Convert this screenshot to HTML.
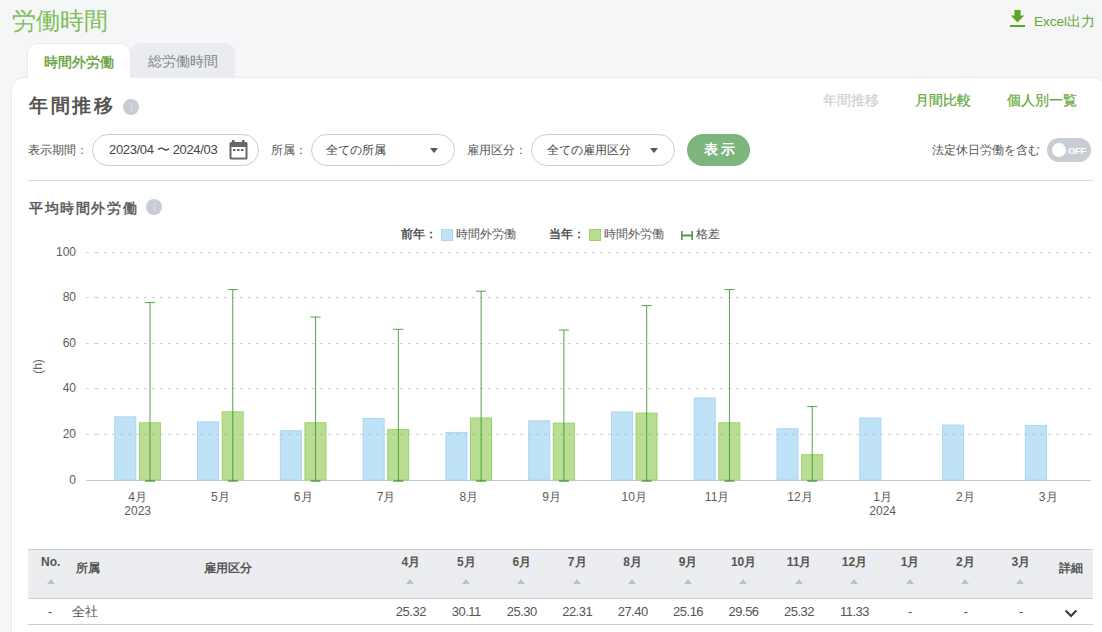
<!DOCTYPE html>
<html><head><meta charset="utf-8">
<style>
*{box-sizing:border-box;margin:0;padding:0}
html,body{width:1102px;height:632px;overflow:hidden;background:#f5f6f8;font-family:"Liberation Sans",sans-serif;color:#555}
.a{position:absolute;white-space:nowrap}
.title{left:12px;top:6.5px;font-size:24px;line-height:28px;color:#80bd57;font-weight:300}
.excel{left:1010px;top:9px;height:20px}
.excel span{position:absolute;left:24px;top:5px;font-size:13.5px;line-height:16px;color:#62a832}
.tab1{left:27px;top:43px;width:104px;height:35px;background:#fff;border:1px solid #e8eaed;border-bottom:none;border-radius:10px 10px 0 0;z-index:2}
.tab1 span{position:absolute;left:16px;top:10px;font-size:14px;line-height:16px;color:#5fa03a;font-weight:normal;-webkit-text-stroke:0.35px #5fa03a}
.tab2{left:130px;top:43px;width:105px;height:34px;background:#eaecef;border-radius:10px 10px 0 0}
.tab2 span{position:absolute;left:18px;top:10px;font-size:14px;line-height:16px;color:#7d8591}
.card{left:11px;top:77px;width:1096px;height:600px;background:#fff;border:1px solid #e8eaed;border-radius:13px;z-index:1}
.h1{left:29px;top:95px;font-size:19px;line-height:22px;font-weight:bold;color:#555;letter-spacing:2.5px}
.info{width:16px;height:16px;border-radius:50%;background:#c8cdd4}
.info:after{content:"";position:absolute;left:7.5px;top:6.5px;width:1.2px;height:5px;background:#e0e4e8}
.info:before{content:"";position:absolute;left:7.5px;top:4px;width:1.2px;height:1.5px;background:#e0e4e8}
.nav{top:92px;font-size:14px;line-height:16px;color:#62a735;-webkit-text-stroke:0.2px currentColor}
.lbl{font-size:12px;line-height:14px;color:#555}
.pill{height:32px;border:1px solid #c9cfd6;border-radius:16px;background:#fff}
.pill span{position:absolute;top:8px;font-size:13px;line-height:14px;color:#444}
.tri{position:absolute;width:0;height:0;border-left:4px solid transparent;border-right:4px solid transparent;border-top:5px solid #555}
.btn{left:687px;top:134px;width:63px;height:32px;border-radius:16px;background:#7db57f}
.btn span{position:absolute;left:16.5px;top:7px;font-size:14px;line-height:16px;color:#fff;font-weight:bold;letter-spacing:3.5px}
.toggle{left:1047px;top:138px;width:44px;height:24px;border-radius:12px;background:#c8cdd4}
.toggle i{position:absolute;left:5px;top:5px;width:14px;height:14px;border-radius:50%;background:#fff}
.toggle span{position:absolute;left:21px;top:6.5px;font-size:9.5px;line-height:11px;color:#fff;font-weight:bold;letter-spacing:-0.5px}
.sep{left:28px;top:180px;width:1065px;height:1px;background:#d5dbe1}
.h2{left:29px;top:200px;font-size:14px;line-height:17px;font-weight:normal;color:#555;letter-spacing:1.6px;-webkit-text-stroke:0.45px #555}
.leg{top:227px;font-size:12px;line-height:14px;color:#555}
.box{width:12px;height:12px}
svg text{font-family:"Liberation Sans",sans-serif;font-size:12px;fill:#5c5c5c}
.thead{left:28px;top:549px;width:1065px;height:50px;background:#ebedf0;border-top:1px solid #c9ced6;border-bottom:1px solid #c9ced6}
.rowb{left:28px;top:624px;width:1065px;height:1px;background:#c9ced6}
.th{font-size:12px;line-height:14px;font-weight:bold;color:#555}
.td{font-size:13px;line-height:14px;color:#555;letter-spacing:-0.5px}
.sort{position:absolute;width:0;height:0;border-left:4.5px solid transparent;border-right:4.5px solid transparent;border-bottom:5px solid #b9c1c9}
</style></head><body>
<div class="a title">労働時間</div>
<div class="a excel"><svg width="16" height="18" viewBox="0 0 16 18" style="position:absolute;left:0;top:1px"><path d="M4.4 0h6.2v5.6h3.6L7.5 12.6 0.8 5.6h3.6z" fill="#5fa51f"/><rect x="0" y="15" width="15" height="2" fill="#5fa51f"/></svg><span>Excel出力</span></div>
<div class="a tab2"><span>総労働時間</span></div>
<div class="a tab1"><span>時間外労働</span></div>
<div class="a card"></div>
<div style="position:absolute;left:0;top:0;width:1102px;height:632px;z-index:3">
<div class="a h1">年間推移</div>
<div class="a info" style="left:123px;top:99px"></div>
<div class="a nav" style="left:823px;color:#cfcfcf">年間推移</div>
<div class="a nav" style="left:915px">月間比較</div>
<div class="a nav" style="left:1007px">個人別一覧</div>

<div class="a lbl" style="left:28px;top:143px">表示期間：</div>
<div class="a pill" style="left:92px;top:134px;width:167px"><span style="left:16px;letter-spacing:-0.35px">2023/04 〜 2024/03</span>
<svg width="20" height="21" viewBox="0 0 20 21" style="position:absolute;left:136px;top:5px"><rect x="3" y="0" width="2.5" height="3" fill="#666"/><rect x="13" y="0" width="2.5" height="3" fill="#666"/><rect x="0.5" y="2" width="18" height="17.6" rx="1.5" fill="#666"/><rect x="2.5" y="7" width="14" height="10.6" fill="#fff"/><rect x="4" y="9" width="2.5" height="2" fill="#666"/><rect x="8" y="9" width="2.5" height="2" fill="#666"/><rect x="12" y="9" width="2.5" height="2" fill="#666"/></svg></div>
<div class="a lbl" style="left:271px;top:143px">所属：</div>
<div class="a pill" style="left:311px;top:134px;width:144px"><span style="left:14px;font-size:12px;top:8px">全ての所属</span><i class="tri" style="left:118px;top:13px"></i></div>
<div class="a lbl" style="left:467px;top:143px">雇用区分：</div>
<div class="a pill" style="left:531px;top:134px;width:144px"><span style="left:15px;font-size:12px;top:8px">全ての雇用区分</span><i class="tri" style="left:118px;top:13px"></i></div>
<div class="a btn"><span>表示</span></div>
<div class="a lbl" style="left:932px;top:143px">法定休日労働を含む</div>
<div class="a toggle"><i></i><span>OFF</span></div>
<div class="a sep"></div>

<div class="a h2">平均時間外労働</div>
<div class="a info" style="left:146px;top:199px"></div>

<div class="a leg" style="left:401px;font-weight:bold">前年：</div>
<div class="a box" style="left:441px;top:229px;background:#bfe2f7;border:1px solid #a8d6f4"></div>
<div class="a leg" style="left:456px">時間外労働</div>
<div class="a leg" style="left:549px;font-weight:bold">当年：</div>
<div class="a box" style="left:589px;top:229px;background:#b9df93;border:1px solid #9ad26c"></div>
<div class="a leg" style="left:604px">時間外労働</div>
<svg class="a" style="left:681px;top:231px" width="12" height="9"><rect x="0" y="0" width="1.6" height="9" fill="#4a9d3e"/><rect x="10.4" y="0" width="1.6" height="9" fill="#4a9d3e"/><rect x="0" y="3.5" width="12" height="2" fill="#4a9d3e"/></svg>
<div class="a leg" style="left:696px">格差</div>

<svg class="a" style="left:0;top:0" width="1102" height="632">
<text x="37.5" y="366.5" transform="rotate(-90 37.5 366.5)" text-anchor="middle" dominant-baseline="central" style="font-size:12px;fill:#666">(h)</text>
<path d="M86 434.5h3M94 434.5h5" stroke="#ccd3da" stroke-width="1"/><line x1="104" y1="434.5" x2="1091" y2="434.5" stroke="#ccd3da" stroke-width="1" stroke-dasharray="3,5"/>
<path d="M86 388.5h3M94 388.5h5" stroke="#ccd3da" stroke-width="1"/><line x1="104" y1="388.5" x2="1091" y2="388.5" stroke="#ccd3da" stroke-width="1" stroke-dasharray="3,5"/>
<path d="M86 343.5h3M94 343.5h5" stroke="#ccd3da" stroke-width="1"/><line x1="104" y1="343.5" x2="1091" y2="343.5" stroke="#ccd3da" stroke-width="1" stroke-dasharray="3,5"/>
<path d="M86 297.5h3M94 297.5h5" stroke="#ccd3da" stroke-width="1"/><line x1="104" y1="297.5" x2="1091" y2="297.5" stroke="#ccd3da" stroke-width="1" stroke-dasharray="3,5"/>
<path d="M86 252.5h3M94 252.5h5" stroke="#ccd3da" stroke-width="1"/><line x1="104" y1="252.5" x2="1091" y2="252.5" stroke="#ccd3da" stroke-width="1" stroke-dasharray="3,5"/>
<line x1="86" y1="480.5" x2="1091" y2="480.5" stroke="#c5ccd4" stroke-width="1"/>
<rect x="114.80" y="416.9" width="21" height="63.1" fill="rgba(127,197,239,0.5)" stroke="#a8d6f4" stroke-width="1"/>
<rect x="139.40" y="422.8" width="21" height="57.2" fill="rgba(115,190,40,0.5)" stroke="#9ad26c" stroke-width="1"/>
<text x="137.7" y="501" text-anchor="middle">4月</text>
<text x="137.7" y="515" text-anchor="middle">2023</text>
<rect x="197.58" y="421.9" width="21" height="58.1" fill="rgba(127,197,239,0.5)" stroke="#a8d6f4" stroke-width="1"/>
<rect x="222.18" y="411.8" width="21" height="68.2" fill="rgba(115,190,40,0.5)" stroke="#9ad26c" stroke-width="1"/>
<text x="220.4" y="501" text-anchor="middle">5月</text>
<rect x="280.36" y="430.8" width="21" height="49.2" fill="rgba(127,197,239,0.5)" stroke="#a8d6f4" stroke-width="1"/>
<rect x="304.96" y="422.8" width="21" height="57.2" fill="rgba(115,190,40,0.5)" stroke="#9ad26c" stroke-width="1"/>
<text x="303.2" y="501" text-anchor="middle">6月</text>
<rect x="363.14" y="418.5" width="21" height="61.5" fill="rgba(127,197,239,0.5)" stroke="#a8d6f4" stroke-width="1"/>
<rect x="387.74" y="429.6" width="21" height="50.4" fill="rgba(115,190,40,0.5)" stroke="#9ad26c" stroke-width="1"/>
<text x="386.0" y="501" text-anchor="middle">7月</text>
<rect x="445.92" y="432.4" width="21" height="47.6" fill="rgba(127,197,239,0.5)" stroke="#a8d6f4" stroke-width="1"/>
<rect x="470.52" y="418.0" width="21" height="62.0" fill="rgba(115,190,40,0.5)" stroke="#9ad26c" stroke-width="1"/>
<text x="468.8" y="501" text-anchor="middle">8月</text>
<rect x="528.70" y="420.8" width="21" height="59.2" fill="rgba(127,197,239,0.5)" stroke="#a8d6f4" stroke-width="1"/>
<rect x="553.30" y="423.1" width="21" height="56.9" fill="rgba(115,190,40,0.5)" stroke="#9ad26c" stroke-width="1"/>
<text x="551.5" y="501" text-anchor="middle">9月</text>
<rect x="611.48" y="411.9" width="21" height="68.1" fill="rgba(127,197,239,0.5)" stroke="#a8d6f4" stroke-width="1"/>
<rect x="636.08" y="413.1" width="21" height="66.9" fill="rgba(115,190,40,0.5)" stroke="#9ad26c" stroke-width="1"/>
<text x="634.3" y="501" text-anchor="middle">10月</text>
<rect x="694.26" y="398.0" width="21" height="82.0" fill="rgba(127,197,239,0.5)" stroke="#a8d6f4" stroke-width="1"/>
<rect x="718.86" y="422.8" width="21" height="57.2" fill="rgba(115,190,40,0.5)" stroke="#9ad26c" stroke-width="1"/>
<text x="717.1" y="501" text-anchor="middle">11月</text>
<rect x="777.04" y="428.7" width="21" height="51.3" fill="rgba(127,197,239,0.5)" stroke="#a8d6f4" stroke-width="1"/>
<rect x="801.64" y="454.7" width="21" height="25.3" fill="rgba(115,190,40,0.5)" stroke="#9ad26c" stroke-width="1"/>
<text x="799.9" y="501" text-anchor="middle">12月</text>
<rect x="859.82" y="418.0" width="21" height="62.0" fill="rgba(127,197,239,0.5)" stroke="#a8d6f4" stroke-width="1"/>
<text x="882.7" y="501" text-anchor="middle">1月</text>
<text x="882.7" y="515" text-anchor="middle">2024</text>
<rect x="942.60" y="425.1" width="21" height="54.9" fill="rgba(127,197,239,0.5)" stroke="#a8d6f4" stroke-width="1"/>
<text x="965.4" y="501" text-anchor="middle">2月</text>
<rect x="1025.38" y="425.6" width="21" height="54.4" fill="rgba(127,197,239,0.5)" stroke="#a8d6f4" stroke-width="1"/>
<text x="1048.2" y="501" text-anchor="middle">3月</text>
<line x1="150.00" y1="302.6" x2="150.00" y2="481" stroke="#37942e" stroke-opacity="0.85" stroke-width="1"/>
<line x1="145.00" y1="302.6" x2="155.00" y2="302.6" stroke="#37942e" stroke-opacity="0.85" stroke-width="1"/>
<line x1="145.00" y1="481" x2="155.00" y2="481" stroke="#37942e" stroke-opacity="0.85" stroke-width="1.5"/>
<line x1="232.78" y1="289.6" x2="232.78" y2="481" stroke="#37942e" stroke-opacity="0.85" stroke-width="1"/>
<line x1="227.78" y1="289.6" x2="237.78" y2="289.6" stroke="#37942e" stroke-opacity="0.85" stroke-width="1"/>
<line x1="227.78" y1="481" x2="237.78" y2="481" stroke="#37942e" stroke-opacity="0.85" stroke-width="1.5"/>
<line x1="315.56" y1="317.0" x2="315.56" y2="481" stroke="#37942e" stroke-opacity="0.85" stroke-width="1"/>
<line x1="310.56" y1="317.0" x2="320.56" y2="317.0" stroke="#37942e" stroke-opacity="0.85" stroke-width="1"/>
<line x1="310.56" y1="481" x2="320.56" y2="481" stroke="#37942e" stroke-opacity="0.85" stroke-width="1.5"/>
<line x1="398.34" y1="329.3" x2="398.34" y2="481" stroke="#37942e" stroke-opacity="0.85" stroke-width="1"/>
<line x1="393.34" y1="329.3" x2="403.34" y2="329.3" stroke="#37942e" stroke-opacity="0.85" stroke-width="1"/>
<line x1="393.34" y1="481" x2="403.34" y2="481" stroke="#37942e" stroke-opacity="0.85" stroke-width="1.5"/>
<line x1="481.12" y1="291.2" x2="481.12" y2="481" stroke="#37942e" stroke-opacity="0.85" stroke-width="1"/>
<line x1="476.12" y1="291.2" x2="486.12" y2="291.2" stroke="#37942e" stroke-opacity="0.85" stroke-width="1"/>
<line x1="476.12" y1="481" x2="486.12" y2="481" stroke="#37942e" stroke-opacity="0.85" stroke-width="1.5"/>
<line x1="563.90" y1="330.0" x2="563.90" y2="481" stroke="#37942e" stroke-opacity="0.85" stroke-width="1"/>
<line x1="558.90" y1="330.0" x2="568.90" y2="330.0" stroke="#37942e" stroke-opacity="0.85" stroke-width="1"/>
<line x1="558.90" y1="481" x2="568.90" y2="481" stroke="#37942e" stroke-opacity="0.85" stroke-width="1.5"/>
<line x1="646.68" y1="305.6" x2="646.68" y2="481" stroke="#37942e" stroke-opacity="0.85" stroke-width="1"/>
<line x1="641.68" y1="305.6" x2="651.68" y2="305.6" stroke="#37942e" stroke-opacity="0.85" stroke-width="1"/>
<line x1="641.68" y1="481" x2="651.68" y2="481" stroke="#37942e" stroke-opacity="0.85" stroke-width="1.5"/>
<line x1="729.46" y1="289.6" x2="729.46" y2="481" stroke="#37942e" stroke-opacity="0.85" stroke-width="1"/>
<line x1="724.46" y1="289.6" x2="734.46" y2="289.6" stroke="#37942e" stroke-opacity="0.85" stroke-width="1"/>
<line x1="724.46" y1="481" x2="734.46" y2="481" stroke="#37942e" stroke-opacity="0.85" stroke-width="1.5"/>
<line x1="812.24" y1="406.6" x2="812.24" y2="481" stroke="#37942e" stroke-opacity="0.85" stroke-width="1"/>
<line x1="807.24" y1="406.6" x2="817.24" y2="406.6" stroke="#37942e" stroke-opacity="0.85" stroke-width="1"/>
<line x1="807.24" y1="481" x2="817.24" y2="481" stroke="#37942e" stroke-opacity="0.85" stroke-width="1.5"/>
<text x="76" y="484.0" text-anchor="end">0</text>
<text x="76" y="438.0" text-anchor="end">20</text>
<text x="76" y="392.0" text-anchor="end">40</text>
<text x="76" y="347.0" text-anchor="end">60</text>
<text x="76" y="301.0" text-anchor="end">80</text>
<text x="76" y="256.0" text-anchor="end">100</text></svg>

<div class="a thead"></div>
<div class="a rowb"></div>
<div class="a th" style="left:41px;top:555px">No.</div>
<i class="sort" style="left:47.0px;top:579px"></i>
<div class="a th" style="left:76px;top:561px">所属</div>
<div class="a th" style="left:204px;top:561px">雇用区分</div>
<div class="a th" style="left:1059px;top:561px">詳細</div>
<div class="a td" style="left:48px;top:605px">-</div>
<div class="a td" style="left:72px;top:605px">全社</div>
<svg class="a" style="left:1064px;top:609px" width="14" height="10"><path d="M1.6 1.6 L7 7 L12.4 1.6" fill="none" stroke="#3c3c3c" stroke-width="2.1"/></svg>
<div class="a th" style="left:380.9px;top:555px;width:60px;text-align:center">4月</div>
<i class="sort" style="left:406.4px;top:579px"></i>
<div class="a td" style="left:380.9px;top:605px;width:60px;text-align:center">25.32</div>
<div class="a th" style="left:436.3px;top:555px;width:60px;text-align:center">5月</div>
<i class="sort" style="left:461.8px;top:579px"></i>
<div class="a td" style="left:436.3px;top:605px;width:60px;text-align:center">30.11</div>
<div class="a th" style="left:491.8px;top:555px;width:60px;text-align:center">6月</div>
<i class="sort" style="left:517.3px;top:579px"></i>
<div class="a td" style="left:491.8px;top:605px;width:60px;text-align:center">25.30</div>
<div class="a th" style="left:547.2px;top:555px;width:60px;text-align:center">7月</div>
<i class="sort" style="left:572.7px;top:579px"></i>
<div class="a td" style="left:547.2px;top:605px;width:60px;text-align:center">22.31</div>
<div class="a th" style="left:602.7px;top:555px;width:60px;text-align:center">8月</div>
<i class="sort" style="left:628.2px;top:579px"></i>
<div class="a td" style="left:602.7px;top:605px;width:60px;text-align:center">27.40</div>
<div class="a th" style="left:658.1px;top:555px;width:60px;text-align:center">9月</div>
<i class="sort" style="left:683.6px;top:579px"></i>
<div class="a td" style="left:658.1px;top:605px;width:60px;text-align:center">25.16</div>
<div class="a th" style="left:713.6px;top:555px;width:60px;text-align:center">10月</div>
<i class="sort" style="left:739.1px;top:579px"></i>
<div class="a td" style="left:713.6px;top:605px;width:60px;text-align:center">29.56</div>
<div class="a th" style="left:769.0px;top:555px;width:60px;text-align:center">11月</div>
<i class="sort" style="left:794.5px;top:579px"></i>
<div class="a td" style="left:769.0px;top:605px;width:60px;text-align:center">25.32</div>
<div class="a th" style="left:824.5px;top:555px;width:60px;text-align:center">12月</div>
<i class="sort" style="left:850.0px;top:579px"></i>
<div class="a td" style="left:824.5px;top:605px;width:60px;text-align:center">11.33</div>
<div class="a th" style="left:880.0px;top:555px;width:60px;text-align:center">1月</div>
<i class="sort" style="left:905.5px;top:579px"></i>
<div class="a td" style="left:880.0px;top:605px;width:60px;text-align:center">-</div>
<div class="a th" style="left:935.4px;top:555px;width:60px;text-align:center">2月</div>
<i class="sort" style="left:960.9px;top:579px"></i>
<div class="a td" style="left:935.4px;top:605px;width:60px;text-align:center">-</div>
<div class="a th" style="left:990.9px;top:555px;width:60px;text-align:center">3月</div>
<i class="sort" style="left:1016.4px;top:579px"></i>
<div class="a td" style="left:990.9px;top:605px;width:60px;text-align:center">-</div>
</div>
</body></html>
